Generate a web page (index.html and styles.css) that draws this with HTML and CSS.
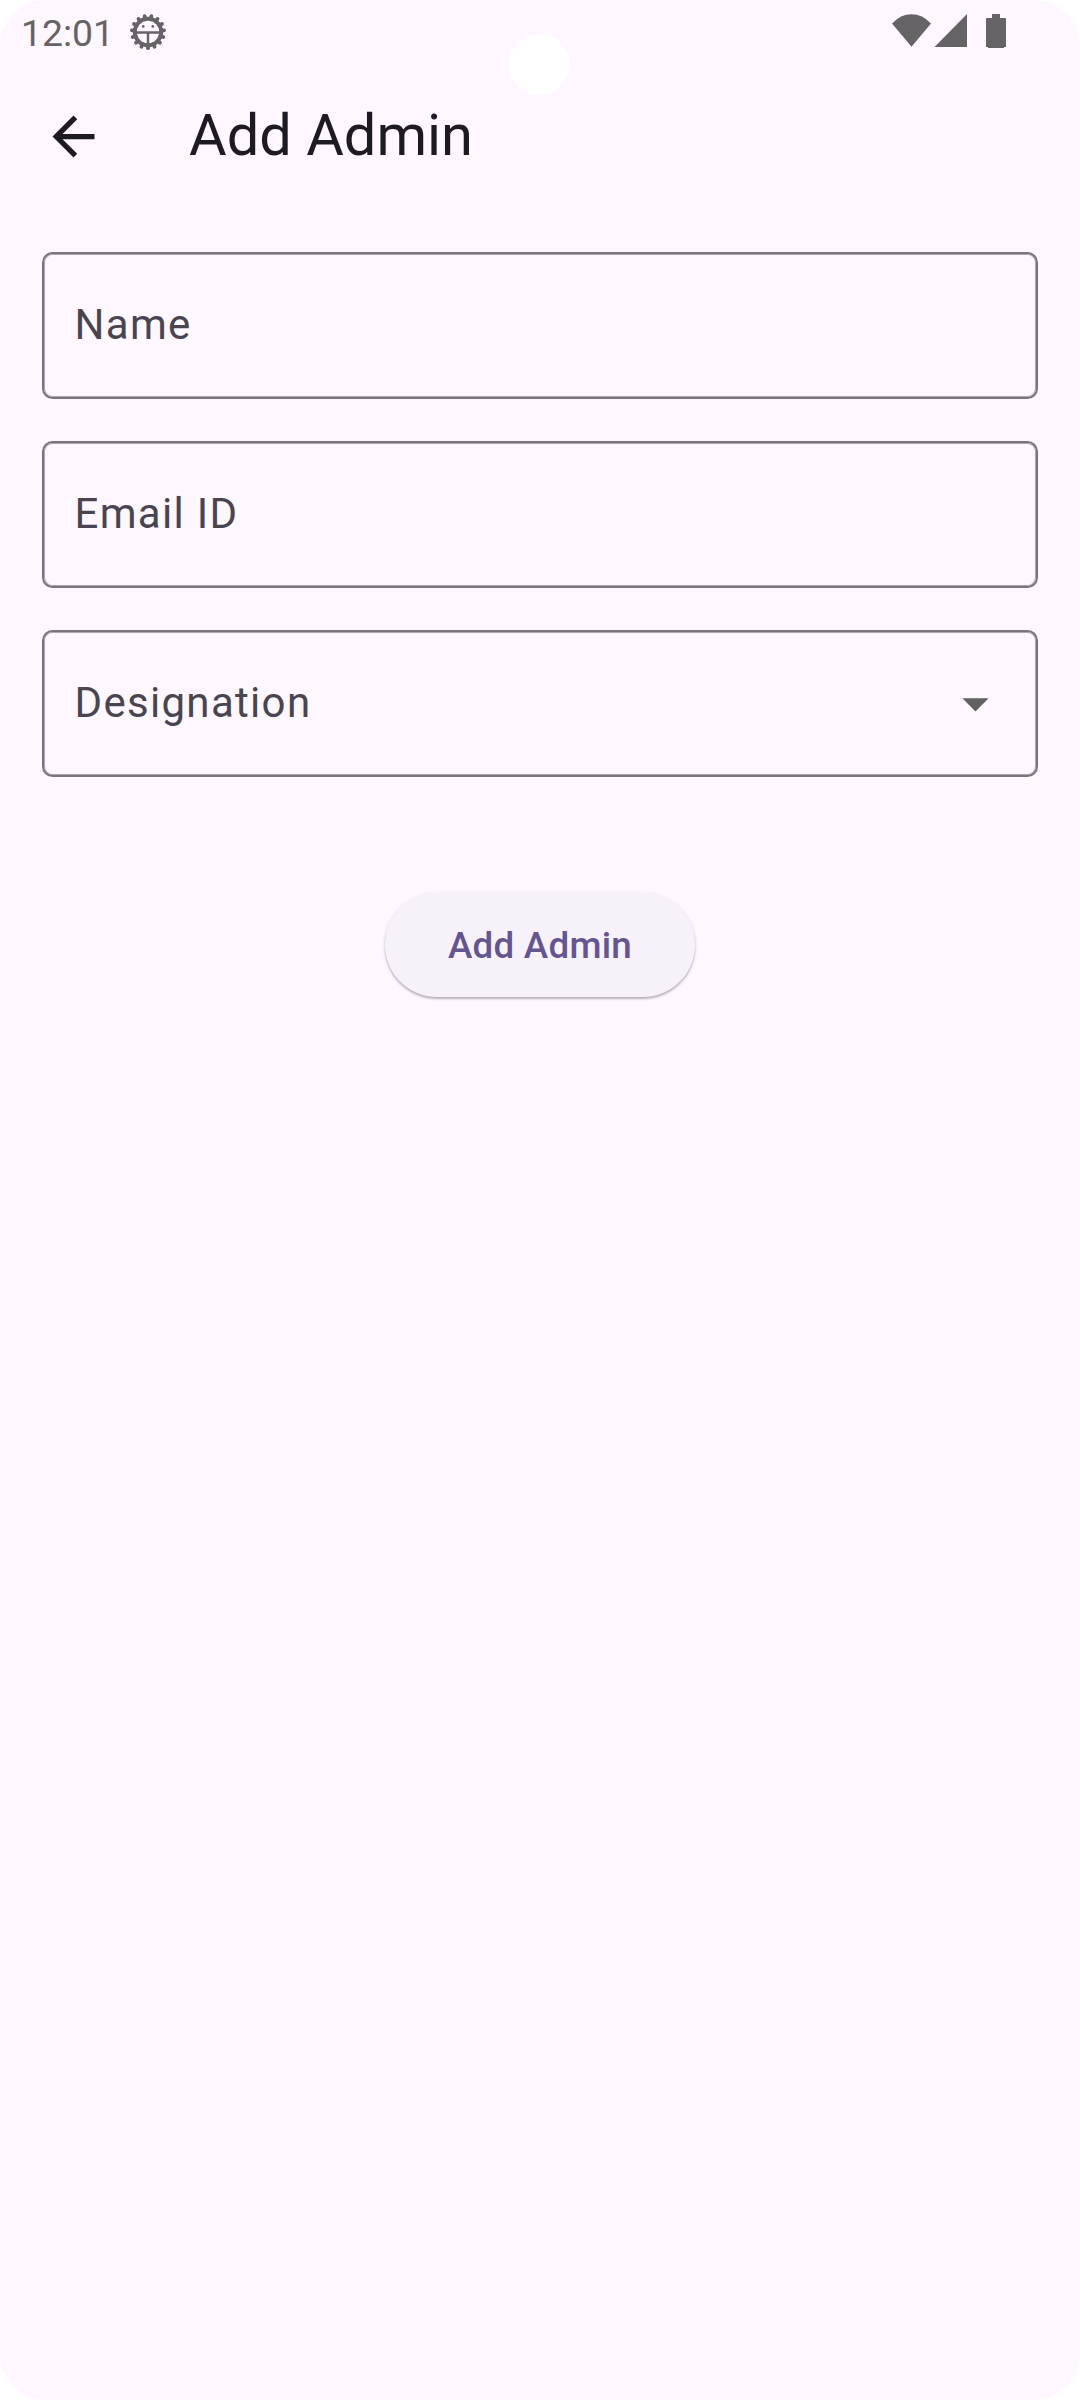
FILE: index.html
```html
<!DOCTYPE html>
<html lang="en">
<head>
<meta charset="utf-8">
<title>Add Admin</title>
<link rel="stylesheet" href="styles.css">
</head>
<body>
<div class="screen">
  <span class="camera"></span>
  <header class="status">
    <span class="clock">12:01</span>
    <svg class="debug" viewBox="-20 -20 40 40">
      <g stroke="#666367" stroke-width="3.8" stroke-linecap="round">
        <path id="t" d="M0 13V16.200"/>
        <use href="#t" transform="rotate(24)"/><use href="#t" transform="rotate(48)"/>
        <use href="#t" transform="rotate(72)"/><use href="#t" transform="rotate(96)"/>
        <use href="#t" transform="rotate(120)"/><use href="#t" transform="rotate(144)"/>
        <use href="#t" transform="rotate(168)"/><use href="#t" transform="rotate(192)"/>
        <use href="#t" transform="rotate(216)"/><use href="#t" transform="rotate(240)"/>
        <use href="#t" transform="rotate(264)"/><use href="#t" transform="rotate(288)"/>
        <use href="#t" transform="rotate(312)"/><use href="#t" transform="rotate(336)"/>
      </g>
      <circle r="13.2" fill="none" stroke="#666367" stroke-width="4"/>
      <path d="M-12 .5H12M0 .5V12" stroke="#666367" stroke-width="2.5"/>
      <circle cx="-4.8" cy="-5.6" r="1.4" fill="#666367"/><circle cx="4.8" cy="-5.6" r="1.4" fill="#666367"/>
    </svg>
    <svg class="signals" viewBox="0 0 120 36" fill="#666367">
      <path d="M2 9.300Q10.500 0 21.500 0T41 9.300L21.500 32.500Z" transform="translate(0 .2)"/>
      <path d="M44.500 33L77 0V33Z"/>
      <path d="M102 0H110V4H115Q116 4 116 5V33H114V34H98V33H96V5Q96 4 97 4H102Z"/>
    </svg>
  </header>
  <div class="appbar">
    <svg class="icon" viewBox="0 0 24 24"><path fill="#1d1b20" d="M20 11H7.830l5.590-5.590L12 4l-8 8 8 8 1.410-1.410L7.830 13H20z"/></svg>
    <h1 class="title">Add Admin</h1>
  </div>
  <main class="form">
    <div class="field"><span class="label">Name</span></div>
    <div class="field"><span class="label">Email ID</span></div>
    <div class="field">
      <span class="label">Designation</span>
      <svg class="icon" viewBox="0 0 24 24"><path fill="#616161" d="M7 10l5 5 5-5z"/></svg>
    </div>
    <button class="submit">Add Admin</button>
  </main>
</div>
</body>
</html>
```
FILE: styles.css
```css
* { box-sizing: border-box; }
body { margin: 0; background: #fff; font-family: Roboto, sans-serif; }
.screen { position: relative; width: 1080px; height: 2400px; background: #fef7ff; border-radius: 46px; overflow: hidden; }
.camera { position: absolute; left: 509px; top: 34px; width: 61px; height: 61px; border-radius: 50%; background: #fff; }
.status { display: flex; height: 63px; padding-left: 21px; align-items: flex-start; }
.clock { width: 107px; padding-top: 11px; font-size: 37.4px; line-height: 44px; color: #666367; }
.debug { width: 40px; height: 40px; margin-top: 12px; }
.signals { width: 120px; height: 36px; margin: 14px 70px 0 auto; }
.appbar { display: flex; align-items: center; height: 147px; padding-left: 42px; gap: 84px; }
.icon { width: 63px; height: 63px; flex: none; }
.title { margin: 0; padding-bottom: 4px; font-size: 57.75px; font-weight: 400; line-height: 74px; color: #1d1b20; }
.form { display: flex; flex-direction: column; gap: 42px; padding: 42px 42px 0; }
.field { display: flex; align-items: center; justify-content: space-between; height: 147px; padding: 0 29.5px 0 30.5px; border: 2px solid #79747e; border-radius: 10.5px; box-shadow: inset 0 0 0 1px rgba(121, 116, 126, .62); }
.label { padding-bottom: 2px; font-size: 42px; line-height: 63px; letter-spacing: 1.3125px; color: #49454f; }
.submit { align-self: center; width: 310px; height: 104px; margin-top: 74px; padding: 1px 0 0; border: 0; border-radius: 52px; background: #f7f2fa; color: #65558f; font: 500 36.75px/52px Roboto, sans-serif; letter-spacing: .2625px; box-shadow: 0 2px 2px rgba(0, 0, 0, .22), 0 1px 4px rgba(0, 0, 0, .1); }
```
